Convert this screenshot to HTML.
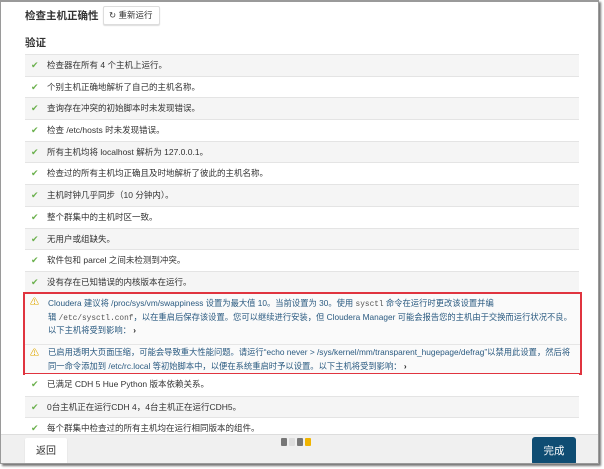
<!DOCTYPE html>
<html><head><meta charset="utf-8"><style>
*{margin:0;padding:0;box-sizing:border-box}
body{width:604px;height:469px;background:#fff;position:relative;overflow:hidden;font-family:"Liberation Sans","Noto Sans CJK SC",sans-serif;color:#333}
.frame{position:absolute;left:0;top:0;width:599px;height:464px;border:1px solid #9a9a9a;border-top:2px solid #9a9a9a;box-shadow:2px 2px 2px #777;background:#fff;overflow:hidden}
.h1{position:absolute;left:24px;top:6px;font-size:10.5px;font-weight:bold;color:#333}
.btn{position:absolute;left:102px;top:4px;width:57px;height:19px;border:1px solid #ddd;border-radius:2px;background:#fff;font-size:8.5px;line-height:17px;padding-left:5px;color:#333;box-shadow:0 1px 1px #ddd}
.h2{position:absolute;left:24px;top:33px;font-size:10.5px;font-weight:bold}
.list{position:absolute;left:24px;top:52px;width:554px}
.row{height:21.7px;border-top:1px solid #e4e4e4;font-size:8.5px;line-height:20px;padding-left:22px;position:relative;color:#333}
.row:nth-child(odd){background:#f5f5f5}
.row:before{content:"✔";position:absolute;left:6px;top:0;color:#6ab04c;font-size:9px}
.warn{position:absolute;left:22px;top:290px;width:559px;height:83px;border:2px solid #e0343f;background:#fafafa;overflow:hidden}
.w{position:relative;padding:3px 0 0 23px;font-size:8.3px;color:#2a5a80;white-space:nowrap}
.w div{height:13.5px;line-height:13.5px;overflow:visible}
.w:before{content:"⚠";position:absolute;left:5px;top:2px;color:#e0a800;font-size:9px;line-height:13px}
.w code{font-family:"Liberation Mono",monospace;font-size:7.8px;color:#555;line-height:10px}
.w b{color:#222}
.list2{position:absolute;left:24px;top:372px;width:554px}
.footer{position:absolute;left:0;top:432px;width:599px;height:32px;background:#f0f0f0;border-top:1px solid #ddd}
.back{position:absolute;left:24px;top:3px;width:42px;height:27px;background:#fff;border-radius:2px;font-size:10px;line-height:27px;text-align:center;box-shadow:0 1px 1px #ccc}
.done{position:absolute;left:531px;top:2px;width:44px;height:28px;background:#0f4d73;border-radius:3px;color:#fff;font-size:10.5px;line-height:28px;text-align:center}
.pg{position:absolute;top:3px;width:6px;height:8px;border-radius:1px}
</style></head><body>
<div class="frame">
<div class="h1">检查主机正确性</div>
<div class="btn">↻ 重新运行</div>
<div class="h2">验证</div>
<div class="list">
<div class="row">检查器在所有 4 个主机上运行。</div>
<div class="row">个别主机正确地解析了自己的主机名称。</div>
<div class="row">查询存在冲突的初始脚本时未发现错误。</div>
<div class="row">检查 /etc/hosts 时未发现错误。</div>
<div class="row">所有主机均将 localhost 解析为 127.0.0.1。</div>
<div class="row">检查过的所有主机均正确且及时地解析了彼此的主机名称。</div>
<div class="row">主机时钟几乎同步（10 分钟内）。</div>
<div class="row">整个群集中的主机时区一致。</div>
<div class="row">无用户或组缺失。</div>
<div class="row">软件包和 parcel 之间未检测到冲突。</div>
<div class="row">没有存在已知错误的内核版本在运行。</div>
</div>
<div class="warn">
<div class="w" style="height:51px;border-bottom:1px solid #e6e6e6"><div>Cloudera 建议将 /proc/sys/vm/swappiness 设置为最大值 10。当前设置为 30。使用 <code>sysctl</code> 命令在运行时更改该设置并编</div><div>辑 <code>/etc/sysctl.conf</code>，以在重启后保存该设置。您可以继续进行安装，但 Cloudera Manager 可能会报告您的主机由于交换而运行状况不良。</div><div>以下主机将受到影响： <b>›</b></div></div>
<div class="w" style="padding-top:1px"><div>已启用透明大页面压缩，可能会导致重大性能问题。请运行“echo never &gt; /sys/kernel/mm/transparent_hugepage/defrag”以禁用此设置，然后将</div><div>同一命令添加到 /etc/rc.local 等初始脚本中，以便在系统重启时予以设置。以下主机将受到影响： <b>›</b></div></div>
</div>
<div class="list2">
<div class="row" style="background:#fff;border-top:none">已满足 CDH 5 Hue Python 版本依赖关系。</div>
<div class="row" style="background:#f5f5f5">0台主机正在运行CDH 4，4台主机正在运行CDH5。</div>
<div class="row" style="background:#fff">每个群集中检查过的所有主机均在运行相同版本的组件。</div>
</div>
<div class="footer">
<div class="back">返回</div>
<div class="pg" style="left:280px;background:#777"></div>
<div class="pg" style="left:288px;background:#ddd"></div>
<div class="pg" style="left:296px;background:#777"></div>
<div class="pg" style="left:304px;background:#f0b400"></div>
<div class="done">完成</div>
</div>
</div>
</body></html>
